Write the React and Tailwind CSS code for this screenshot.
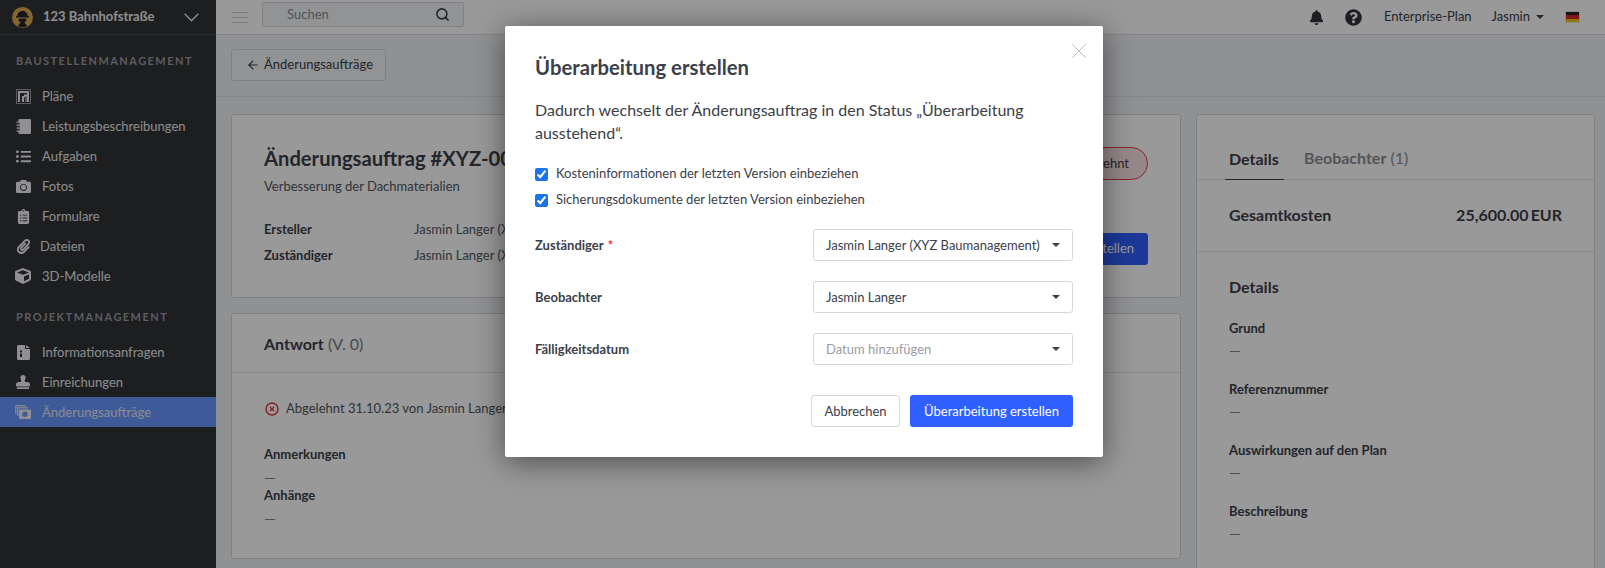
import React from "react";
import { ArrowLeft, Search, X } from "lucide-react";
import { FaBell, FaCamera, FaClipboardList, FaCube, FaListUl, FaPaperclip, FaQuestionCircle, FaStamp } from "react-icons/fa";

const PlanIcon = () => (
  <svg viewBox="0 0 15 15" className="w-[15px] h-[15px]" fill="currentColor">
    <rect x=".5" y=".5" width="14" height="14" fill="none" stroke="currentColor" opacity=".55" />
    <path fillRule="evenodd" d="M2 2h11v11H2zM4 4v9h2V7h2V5.500h3V4zM8 8.500V13h1.500V9H11v4h-.5V7.500H9.500V8.500z" />
  </svg>
);
const NotebookIcon = () => (
  <svg viewBox="0 0 15 15" className="w-[15px] h-[15px]" fill="currentColor">
    <path d="M3.500 0H14a1 1 0 0 1 1 1v13a1 1 0 0 1-1 1H3.500a1 1 0 0 1-1-1V1a1 1 0 0 1 1-1z" />
    <path d="M.5 2.500h3.500v1.300H.5zM.5 5.500h3.500v1.300H.5zM.5 8.500h3.500v1.300H.5zM.5 11.500h3.500v1.300H.5z" />
    <path d="M2.500 3.800h1.200v1.700H2.500zM2.500 6.800h1.200v1.700H2.500zM2.500 9.800h1.200v1.700H2.500z" fill="#303236" />
  </svg>
);
const InfoDocIcon = () => (
  <svg viewBox="0 0 13 15" className="w-[13px] h-[15px]" fill="currentColor">
    <path fillRule="evenodd" d="M1.500 0H8v4h5v9.500a1.500 1.500 0 0 1-1.500 1.500h-10A1.500 1.500 0 0 1 0 13.500v-12A1.500 1.500 0 0 1 1.500 0zM9 0l4 3H9zM3 5.500v2h2v-2zM3 8.500V12h2V8.500z" />
  </svg>
);
const ChangeIcon = () => (
  <svg viewBox="0 0 16 14" className="w-[16px] h-[14px]" fill="currentColor">
    <path d="M1 0h10v1.500H1.500V9H0V1a1 1 0 0 1 1-1z" opacity=".75" />
    <path d="M3 2h10v1.500H3.500V11H2V3a1 1 0 0 1 1-1z" opacity=".75" />
    <path fillRule="evenodd" d="M5 4.500h10a1 1 0 0 1 1 1V13a1 1 0 0 1-1 1H5a1 1 0 0 1-1-1V5.500a1 1 0 0 1 1-1zM10 6.500a2.700 2.700 0 1 0 0 5.400 2.700 2.700 0 0 0 0-5.400z" />
  </svg>
);
const Logo = () => (
  <svg viewBox="0 0 22 22" className="w-[21px] h-[21px] shrink-0">
    <circle cx="11" cy="11" r="11" fill="#e0aa50" />
    <path d="M5.500 9.500a5.500 5.500 0 0 1 11 0h1.300v1.400H4.200V9.500z" fill="#24252a" />
    <path d="M7 12h8v2.300l-2 2 3 3.600a10 10 0 0 1-10 0l3-3.600-2-2z" fill="#24252a" />
  </svg>
);
const Caret = ({ className = "" }) => (
  <span className={`inline-block w-0 h-0 border-x-[4px] border-x-transparent border-t-[4px] border-t-[#3b4049] ${className}`} />
);

const group1 = [
  ["Pläne", <PlanIcon />],
  ["Leistungsbeschreibungen", <NotebookIcon />],
  ["Aufgaben", <FaListUl size={15} />],
  ["Fotos", <FaCamera size={15} />],
  ["Formulare", <FaClipboardList size={15} />],
  ["Dateien", <FaPaperclip size={15} />, true],
  ["3D-Modelle", <FaCube size={16} />],
];
const group2 = [
  ["Informationsanfragen", <InfoDocIcon />],
  ["Einreichungen", <FaStamp size={14} />],
  ["Änderungsaufträge", <ChangeIcon />, false, true],
];

function NavItem({ label, icon, tight, active }) {
  return (
    <div className={`h-[30px] flex items-center pl-[15px] text-[13px] ${active ? "bg-[#6996ff] text-[#e4e8f2]" : "text-[#e9eaec]"}`}>
      <span className="w-[16px] h-[16px] flex items-center justify-center shrink-0 text-[#f0f1f3]">{icon}</span>
      <span className={`pt-[2px] ${tight ? "ml-[9px]" : "ml-[11px]"}`}>{label}</span>
    </div>
  );
}

function Sidebar() {
  return (
    <aside className="w-[216px] shrink-0 h-full bg-[#303236]">
      <div className="h-[35px] border-b border-[#4a4c50] flex items-center pl-[12px] pr-[17px]">
        <Logo />
        <span className="ml-[10px] text-[13px] font-bold text-[#eceded] flex-1">123 Bahnhofstraße</span>
        <svg viewBox="0 0 15 9" className="w-[15px] h-[9px]" fill="none" stroke="#eceded" strokeWidth="1.300"><path d="M.7.7 7.500 7.800 14.300.7" /></svg>
      </div>
      <div className="h-[46px] pl-[16px] pt-[17px] text-[11px] leading-[18px] font-bold tracking-[1.45px] text-[#9a9ca0]">BAUSTELLENMANAGEMENT</div>
      {group1.map(([l, i, t]) => <NavItem key={l} label={l} icon={i} tight={t} />)}
      <div className="h-[46px] pl-[16px] pt-[17px] text-[11px] leading-[18px] font-bold tracking-[1.45px] text-[#9a9ca0]">PROJEKTMANAGEMENT</div>
      {group2.map(([l, i, t, a]) => <NavItem key={l} label={l} icon={i} tight={t} active={a} />)}
    </aside>
  );
}

function TopBar() {
  return (
    <header className="h-[35px] bg-white border-b border-[#dcdfe4] flex items-center text-[13px] text-[#3b4049]">
      <div className="ml-[16px] w-[16px] flex flex-col gap-[4px]">
        <span className="h-px bg-[#c9ccd1]" /><span className="h-px bg-[#c9ccd1]" /><span className="h-px bg-[#c9ccd1]" />
      </div>
      <div className="ml-[14px] w-[202px] h-[25px] border border-[#d5d8dd] rounded-[2px] bg-[#f4f5f7] flex items-center pl-[24px] pr-[13px] justify-between mb-[5px]">
        <span className="text-[#8a8d93]">Suchen</span>
        <Search size={15} strokeWidth={2.500} className="text-[#3b4049]" />
      </div>
      <div className="ml-auto flex items-center">
        <FaBell size={15} className="text-[#2f3238]" />
        <FaQuestionCircle size={17} className="ml-[21px] text-[#2f3238]" />
        <span className="ml-[22px]">Enterprise-Plan</span>
        <span className="ml-[20px] mb-[1px]">Jasmin</span>
        <Caret className="ml-[6px]" />
        <span className="ml-[21px] mr-[25px] w-[15px] h-[12px] flex flex-col border border-[#e6e6e6] bg-[#e6e6e6]">
          <span className="flex-1 bg-[#222]" /><span className="flex-1 bg-[#d8262c]" /><span className="flex-1 bg-[#f5c518]" />
        </span>
      </div>
    </header>
  );
}

const Card = ({ className = "", children }) => (
  <section className={`bg-white border border-[#d5d8dd] rounded-[3px] ${className}`}>{children}</section>
);

function LeftColumn() {
  return (
    <div className="flex-1 min-w-0 flex flex-col gap-[15px]">
      <Card className="h-[184px] flex justify-between px-[32px] pt-[28px]">
        <div>
          <h1 className="text-[20.200px] leading-[30px] font-bold text-[#3b4049]">Änderungsauftrag #XYZ-001</h1>
          <p className="mt-[3px] text-[13px] leading-[20px] text-[#50555e]">Verbesserung der Dachmaterialien</p>
          <dl className="mt-[21px] text-[13px]">
            <div className="flex h-[26px] items-center"><dt className="w-[150px] font-bold text-[#3b4049]">Ersteller</dt><dd className="text-[#50555e]">Jasmin Langer (XYZ Baumanagement)</dd></div>
            <div className="flex h-[26px] items-center"><dt className="w-[150px] font-bold text-[#3b4049]">Zuständiger</dt><dd className="text-[#50555e]">Jasmin Langer (XYZ Baumanagement)</dd></div>
          </dl>
        </div>
        <div className="flex flex-col items-end pt-[4px]">
          <span className="h-[33px] px-[18px] flex items-center rounded-full border border-[#e53e46] bg-[#fbe3e3] text-[13px] text-[#3b4049]">Abgelehnt</span>
          <button className="mt-[53px] h-[32px] px-[14px] rounded-[3px] bg-[#2f5fff] text-white text-[13px]">Überarbeitung erstellen</button>
        </div>
      </Card>
      <Card className="h-[246px]">
        <div className="h-[59px] border-b border-[#e3e5e9] px-[32px] pt-[15px] text-[16px] leading-[30px] text-[#3b4049]">
          <span className="font-bold">Antwort</span> <span className="text-[#777b83]">(V. 0)</span>
        </div>
        <div className="px-[32px] pt-[25px]">
          <div className="flex items-center h-[22px] text-[13px] text-[#50555e]">
            <svg viewBox="0 0 14 14" className="w-[14px] h-[14px] ml-[1px]" fill="none" stroke="#e0323c" strokeWidth="1.400">
              <circle cx="7" cy="7" r="6" /><path d="m5 5 4 4m0-4-4 4" />
            </svg>
            <span className="ml-[7px]">Abgelehnt 31.10.23 von Jasmin Langer</span>
          </div>
          <div className="mt-[23px] h-[22px] leading-[22px] text-[13px] font-bold text-[#3b4049]">Anmerkungen</div>
          <div className="h-[19px] leading-[25px] text-[15px] text-[#80848b]">—</div>
          <div className="h-[22px] leading-[22px] text-[13px] font-bold text-[#3b4049]">Anhänge</div>
          <div className="h-[19px] leading-[25px] text-[15px] text-[#80848b]">—</div>
        </div>
      </Card>
    </div>
  );
}

const detailFields = ["Grund", "Referenznummer", "Auswirkungen auf den Plan", "Beschreibung"];

function RightColumn() {
  return (
    <Card className="w-[399px] shrink-0 h-[600px]">
      <div className="h-[65px] border-b border-[#e3e5e9] pl-[28px] flex items-end text-[16px]">
        <div className="h-[33px] w-[59px] px-[4px] border-b border-[#3b4049] font-bold text-[#3b4049] leading-[24px] -mb-px">Details</div>
        <div className="h-[33px] ml-[20px] leading-[24px] text-[#8a8d93]"><span className="font-bold">Beobachter</span> (1)</div>
      </div>
      <div className="h-[72px] border-b border-[#e3e5e9] pl-[32px] pr-[32px] pb-[2px] flex items-center justify-between text-[16px] font-bold text-[#3b4049]">
        <span>Gesamtkosten</span>
        <span className="flex gap-[2px]"><span>25,600.00</span><span>EUR</span></span>
      </div>
      <div className="pl-[32px] pt-[22px]">
        <h2 className="text-[16px] leading-[26px] font-bold text-[#3b4049]">Details</h2>
        <div className="mt-[18px] flex flex-col gap-[20px]">
          {detailFields.map((f) => (
            <div key={f} className="h-[41px]">
              <div className="h-[20px] leading-[20px] text-[13px] font-bold text-[#3b4049]">{f}</div>
              <div className="h-[21px] leading-[25px] text-[15px] text-[#80848b]">—</div>
            </div>
          ))}
        </div>
      </div>
    </Card>
  );
}

const Check = ({ label }) => (
  <label className="h-[26px] flex items-center text-[13px] text-[#3b4049]">
    <input type="checkbox" defaultChecked className="w-[13px] h-[13px] m-0 accent-[#1a73e8]" />
    <span className="ml-[8px]">{label}</span>
  </label>
);

const SelectRow = ({ label, value, required, placeholder }) => (
  <div className="flex items-center justify-between h-[32px]">
    <span className="pt-[1px] text-[13px] font-bold text-[#3b4049]">
      {label}{required && <span className="ml-[4px] text-[#e0323c]">*</span>}
    </span>
    <div className="w-[260px] h-[32px] border border-[#d5d8dd] rounded-[3px] bg-white flex items-center justify-between pl-[12px] pr-[12px] text-[13px]">
      <span className={`pt-[1px] ${placeholder ? "text-[#9a9da3]" : "text-[#3b4049]"}`}>{value}</span>
      <Caret />
    </div>
  </div>
);

function Modal() {
  return (
    <div role="dialog" className="absolute left-[505px] top-[26px] w-[598px] h-[431px] bg-white rounded-[2px] shadow-[0_5px_30px_rgba(0,0,0,0.5)] px-[30px] pt-[26px]">
      <button aria-label="Schließen" className="absolute right-[11px] top-[12px] text-[#b9bcc2]">
        <X size={26} strokeWidth={0.9} />
      </button>
      <h2 className="text-[20.300px] leading-[30px] font-bold text-[#3b4049]">Überarbeitung erstellen</h2>
      <p className="mt-[16px] text-[16px] leading-[23px] text-[#3b4049] w-[500px]">Dadurch wechselt der Änderungsauftrag in den Status „Überarbeitung ausstehend“.</p>
      <div className="mt-[17px]">
        <Check label="Kosteninformationen der letzten Version einbeziehen" />
        <Check label="Sicherungsdokumente der letzten Version einbeziehen" />
      </div>
      <div className="mt-[16px] flex flex-col gap-[20px]">
        <SelectRow label="Zuständiger" required value="Jasmin Langer (XYZ Baumanagement)" />
        <SelectRow label="Beobachter" value="Jasmin Langer" />
        <SelectRow label="Fälligkeitsdatum" value="Datum hinzufügen" placeholder />
      </div>
      <div className="mt-[30px] flex justify-end gap-[10px] text-[13px]">
        <button className="h-[32px] w-[89px] pt-[1px] border border-[#d5d8dd] rounded-[3px] bg-white text-[#3b4049]">Abbrechen</button>
        <button className="h-[32px] w-[163px] pt-[1px] rounded-[3px] bg-[#2f5fff] text-white">Überarbeitung erstellen</button>
      </div>
    </div>
  );
}

export default function App() {
  return (
    <div className="relative w-[1605px] h-[568px] overflow-hidden flex font-[Lato,sans-serif] bg-[#f0f2f6]">
      <Sidebar />
      <main className="flex-1 min-w-0">
        <TopBar />
        <div className="h-[62px] border-b border-[#dcdfe4] pl-[15px] pt-[14px]">
          <button className="h-[32px] w-[155px] border border-[#d5d8dd] rounded-[3px] bg-[#f4f5f7] flex items-center pl-[14px] text-[13px] text-[#3b4049]">
            <ArrowLeft size={14} strokeWidth={2} />
            <span className="ml-[4px]">Änderungsaufträge</span>
          </button>
        </div>
        <div className="flex gap-[15px] pl-[15px] pr-[10px] pt-[17px]">
          <LeftColumn />
          <RightColumn />
        </div>
      </main>
      <div className="absolute inset-0 bg-black/40" />
      <Modal />
    </div>
  );
}
